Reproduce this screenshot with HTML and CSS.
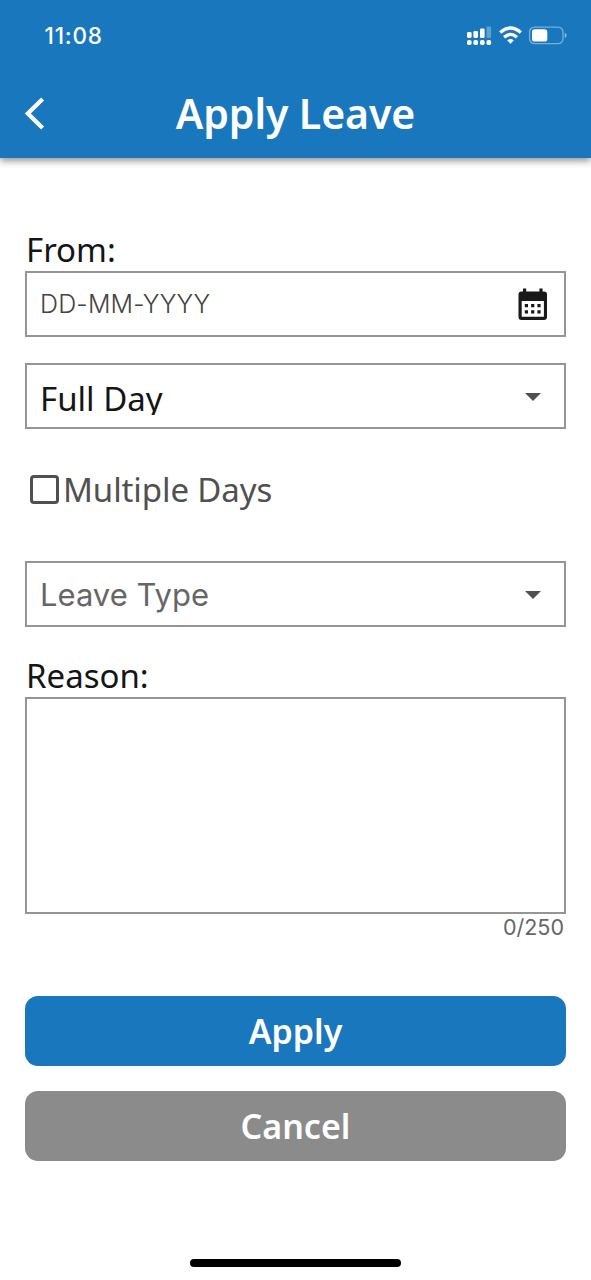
FILE: index.html
```html
<!DOCTYPE html>
<html lang="en">
<head>
<meta charset="utf-8">
<title>Apply Leave</title>
<link rel="stylesheet" href="styles.css">
</head>
<body>
<header class="header">
  <div class="status">
    <span class="time">11:08</span>
    <svg class="status-icons" width="101" height="22" viewBox="466 25 101 22" fill="#fff">
      <rect x="467" y="32" width="4.6" height="6" rx="1.4"/><rect x="473.4" y="31" width="4.6" height="7" rx="1.4"/><rect x="480" y="28.5" width="4.6" height="9.5" rx="1.2"/><rect x="486.5" y="26.5" width="4.6" height="11.5" rx="1.2" opacity=".3"/>
      <rect x="467" y="40" width="4.6" height="5" rx="1.7"/><rect x="473.4" y="40" width="4.6" height="5" rx="1.7"/><rect x="480" y="40" width="4.6" height="5" rx="1.7"/><rect x="486.5" y="40" width="4.6" height="5" rx="1.7"/>
      <g fill="none" stroke="#fff" stroke-width="3.3"><path d="M500.2 32.6Q510.5 23.5 520.8 32.6"/><path d="M504.1 37.2Q510.5 31.6 516.9 37.2"/></g>
      <path d="M507.2 40.4Q510.5 37.7 513.8 40.4L510.5 43.8Z"/>
      <rect x="529.6" y="27.1" width="33.4" height="16.6" rx="5" fill="none" stroke="#fff" stroke-opacity=".42" stroke-width="1.3"/>
      <rect x="532" y="29.3" width="15.3" height="12.2" rx="2.6"/>
      <path d="M564.7 32.8Q566.6 33.5 566.6 35.4T564.7 38Z" opacity=".5"/>
    </svg>
  </div>
  <div class="titlebar">
    <svg class="back" width="24" height="36" viewBox="22 96 24 36" fill="none" stroke="#fff" stroke-width="4.2"><path d="M42.6 99L27.8 113.5L42.6 128"/></svg>
    <h1 class="title"><span>Apply Leave</span></h1>
  </div>
</header>
<main class="form">
  <div class="label"><span class="from">From:</span></div>
  <div class="field">
    <span class="date">DD-MM-YYYY</span>
    <svg class="calendar" width="30" height="33" viewBox="518 288 30 33"><path fill="#191919" fill-rule="evenodd" d="M523 288.5h3.2v3h13.2v-3h3.2v3h1.4q3 0 3 3V317q0 3-3 3H521.500q-3 0-3-3v-22.500q0-3 3-3H523ZM521.700 301v15.800h22.200V301Z"/><path fill="#191919" d="M524.800 304h3.200v3.200h-3.200zM531.100 304h3.200v3.200h-3.200zM537.400 304h3.200v3.200h-3.200zM524.800 310.300h3.200v3.200h-3.200zM531.100 310.300h3.200v3.200h-3.200zM537.400 310.300h3.200v3.200h-3.200z"/></svg>
  </div>
  <div class="field select">
    <span class="value">Full Day</span>
    <svg class="arrow" width="16" height="8" viewBox="0 0 16 8"><path fill="#505050" d="M0 0H16L8 8Z"/></svg>
  </div>
  <div class="check"><span class="box"></span><span class="check-text">Multiple Days</span></div>
  <div class="field leave">
    <span class="placeholder">Leave Type</span>
    <svg class="arrow" width="16" height="8" viewBox="0 0 16 8"><path fill="#505050" d="M0 0H16L8 8Z"/></svg>
  </div>
  <div class="label reason-label"><span class="reason">Reason:</span></div>
  <div class="textarea"></div>
  <div class="counter">0/250</div>
  <div class="button apply"><span>Apply</span></div>
  <div class="button cancel"><span>Cancel</span></div>
</main>
<div class="home"></div>
</body>
</html>
```
FILE: styles.css
```css
* { box-sizing: border-box; }
body { margin: 0; width: 591px; height: 1280px; overflow: hidden; background: #fff; font-family: "Noto Sans", sans-serif; color: #151515; display: flex; flex-direction: column; }
span { white-space: nowrap; }
svg { display: block; flex: none; }
.header { height: 158px; flex: none; background: #1977bd; box-shadow: 0 3px 7px rgba(0,0,0,.42); color: #fff; }
.status { height: 72px; padding: 25px 24px 0 44px; display: flex; justify-content: space-between; align-items: flex-start; }
.time { font: 500 22.5px/22px Inter, sans-serif; letter-spacing: .8px; padding-left: .5px; }
.titlebar { height: 86px; display: grid; grid-template-columns: 24px 1fr 24px; padding: 0 22px; }
.back { margin-top: 24px; }
.title { margin: 0; font-size: 41px; line-height: 82px; font-weight: 600; text-align: center; letter-spacing: -.1px; }
.form { padding: 73px 25px 0; display: flex; flex-direction: column; }
.label { height: 40px; font-size: 33px; line-height: 38px; padding-left: 1px; }
.field { height: 66px; border: 2px solid #959595; display: flex; align-items: center; justify-content: space-between; padding: 0 16px 0 13px; }
.date { font: 300 25px/32px Inter, sans-serif; color: #444; letter-spacing: .2px; }
.select { margin-top: 26px; padding-right: 23px; }
.value { font-size: 33px; line-height: 43px; height: 38px; overflow: hidden; }
.arrow { margin-top: 1px; }
.check { margin: 43px 0 0 5px; height: 34px; display: flex; align-items: center; color: #505050; font-size: 33px; line-height: 34px; letter-spacing: -.1px; }
.check-text { padding-top: 2px; }
.box { width: 29px; height: 29px; border: 3px solid #505050; border-radius: 4px; margin-right: 4px; }
.leave { margin-top: 55px; padding-right: 23px; }
.placeholder { font: 400 31px/36px Inter, sans-serif; color: #666; padding-top: 1px; }
.reason-label { margin-top: 30px; }
.textarea { height: 217px; border: 2px solid #959595; }
.counter { height: 28px; font: 400 21.500px/27px Inter, sans-serif; color: #666; text-align: right; padding-right: 2px; }
.button { height: 70px; border-radius: 13px; color: #fff; font-size: 34px; font-weight: 600; line-height: 70px; text-align: center; }
.apply { margin-top: 54px; background: #1977bd; }
.cancel { margin-top: 25px; background: #8b8b8b; }
.home { width: 211px; height: 8px; border-radius: 4px; background: #000; margin: auto auto 13px; }
```
